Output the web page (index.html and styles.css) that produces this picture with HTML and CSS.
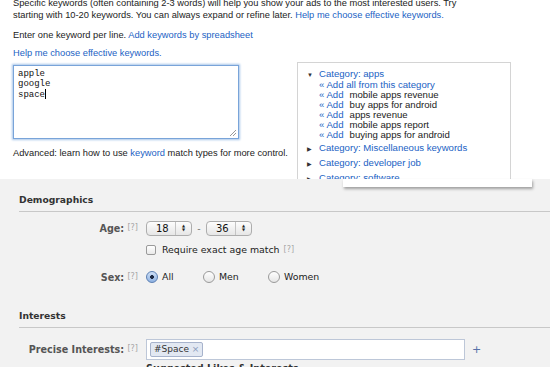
FILE: index.html
```html
<!DOCTYPE html>
<html lang="en">

<head>
    <meta charset="UTF-8">
    <meta name="viewport" content="width=device-width, initial-scale=1.0">
    <link rel="stylesheet" href="styles.css">
    <title>Keywords and Targeting</title>
</head>

<body>

    <div class="keyword-panel">
        <p class="intro">Specific keywords (often containing 2-3 words) will help you show your ads to the most interested users. Try<br>
            starting with 10-20 keywords. You can always expand or refine later. <a href="#">Help me choose effective keywords.</a></p>

        <div class="keyword-row">
            <div class="keyword-entry">
                <p class="line">Enter one keyword per line. <a href="#">Add keywords by spreadsheet</a></p>
                <p class="line"><a href="#">Help me choose effective keywords.</a></p>
                <div class="keyword-box">apple<br>google<br>space<span class="caret"></span>
                    <svg class="grip" width="8" height="8" viewBox="0 0 8 8">
                        <path d="M7 1L1 7M7 4L4 7" stroke="#999" stroke-width="1" fill="none" />
                    </svg>
                </div>
                <p class="advanced">Advanced: learn how to use <a href="#">keyword</a> match types for more control.</p>
            </div>

            <div class="suggestions">
                <div class="cat open"><span class="arrow">&#9660;</span><a href="#">Category: apps</a></div>
                <ul class="adds">
                    <li><a href="#">&laquo; Add all from this category</a></li>
                    <li><a href="#">&laquo; Add</a><span>mobile apps revenue</span></li>
                    <li><a href="#">&laquo; Add</a><span>buy apps for android</span></li>
                    <li><a href="#">&laquo; Add</a><span>apps revenue</span></li>
                    <li><a href="#">&laquo; Add</a><span>mobile apps report</span></li>
                    <li><a href="#">&laquo; Add</a><span>buying apps for android</span></li>
                </ul>
                <div class="cat"><span class="arrow">&#9654;</span><a href="#">Category: Miscellaneous keywords</a></div>
                <div class="cat"><span class="arrow">&#9654;</span><a href="#">Category: developer job</a></div>
                <div class="cat"><span class="arrow">&#9654;</span><a href="#">Category: software</a></div>
            </div>
        </div>
    </div>
    <div class="paper-edge"></div>

    <div class="targeting">
        <h2 class="section-title">Demographics</h2>
        <div class="field-grid demo">
            <div class="label">Age: <span class="help">[?]</span></div>
            <div class="age-range">
                <span class="spinner"><span class="val">18</span><span class="updown">&#9650;<br>&#9660;</span></span>
                <span class="dash">-</span>
                <span class="spinner"><span class="val">36</span><span class="updown">&#9650;<br>&#9660;</span></span>
            </div>

            <div></div>
            <div class="exact"><span class="checkbox"></span>Require exact age match <span class="help up">[?]</span></div>

            <div class="label sex">Sex: <span class="help">[?]</span></div>
            <div class="radios sex">
                <span class="radio-opt"><span class="radio on"></span>All</span>
                <span class="radio-opt"><span class="radio"></span>Men</span>
                <span class="radio-opt"><span class="radio"></span>Women</span>
            </div>
        </div>

        <h2 class="section-title interests">Interests</h2>
        <div class="field-grid">
            <div class="label precise">Precise Interests: <span class="help">[?]</span></div>
            <div class="interest-line">
                <div class="token-input"><span class="token">#Space <span class="x">&times;</span></span></div>
                <span class="plus">+</span>
            </div>
            <div></div>
            <div class="suggested">Suggested Likes &amp; Interests</div>
        </div>
    </div>

</body>

</html>
```

FILE: styles.css
```css
body {
    margin: 0;
    background-color: #f2f2f2;
    overflow: hidden;
}

a {
    color: #2262c4;
    text-decoration: none;
}

/* top: keyword tool */

.keyword-panel {
    background-color: #fff;
    height: 179px;
    overflow: hidden;
    padding-left: 13px;
    font-family: 'Liberation Sans', Arial, sans-serif;
    font-size: 9.3px;
    color: #222;
}

.intro {
    margin: -3px 0 0 0;
    line-height: 12px;
    white-space: nowrap;
}

.keyword-row {
    display: flex;
    align-items: flex-start;
    gap: 58px;
    margin-top: 8px;
}

.keyword-entry {
    width: 226px;
}

.line {
    margin: 0 0 6px 0;
    line-height: 12px;
    white-space: nowrap;
}

.keyword-box {
    position: relative;
    box-sizing: border-box;
    width: 226px;
    height: 74px;
    margin-top: 2px;
    padding: 3px 4px;
    border: 1px solid #79a4d9;
    box-shadow: 0 0 2px 1px #a9c6ea;
    font-family: 'Liberation Mono', 'Courier New', monospace;
    font-size: 9px;
    line-height: 10px;
    color: #111;
}

.caret {
    display: inline-block;
    width: 1px;
    height: 10px;
    background-color: #000;
    vertical-align: -2px;
}

.grip {
    position: absolute;
    right: 1px;
    bottom: 1px;
}

.advanced {
    margin: 8px 0 0 0;
    line-height: 12px;
    white-space: nowrap;
}

.suggestions {
    width: 203px;
    height: 130px;
    margin-top: 33px;
    padding: 6px 0 0 9px;
    border: 1px solid #d4d4d4;
    line-height: 14px;
    font-size: 9.6px;
}

.cat.open {
    line-height: 10px;
}

.arrow {
    display: inline-block;
    width: 12px;
    font-size: 6px;
    color: #333;
}

.adds {
    list-style: none;
    margin: 0 0 1px 12px;
    padding: 0;
    line-height: 10px;
}

.adds li span {
    margin-left: 6px;
    color: #222;
}

.paper-edge {
    position: absolute;
    left: 343px;
    top: 179px;
    width: 189px;
    height: 8px;
    background-color: #fff;
    box-shadow: 1px 2px 3px rgba(0, 0, 0, 0.35);
}

/* bottom: audience targeting */

.targeting {
    padding-left: 19px;
    font-family: 'DejaVu Sans', 'Lucida Grande', sans-serif;
    font-size: 9.4px;
    color: #333;
}

.section-title {
    margin: 0;
    padding: 14px 0 4px 0;
    line-height: 14px;
    font-size: 9.2px;
    font-weight: bold;
    color: #333;
    border-bottom: 1px solid #c8c8c8;
}

.section-title.interests {
    padding-top: 25px;
}

.field-grid {
    display: grid;
    grid-template-columns: 127px 1fr;
    align-items: center;
}

.field-grid.demo {
    margin-top: 9px;
    row-gap: 7px;
}

.label {
    text-align: right;
    padding-right: 8px;
    font-weight: bold;
    font-size: 9.6px;
    color: #555;
    white-space: nowrap;
}

.label.sex,
.radios.sex {
    margin-top: 6px;
}

.help {
    font-weight: normal;
    font-size: 8px;
    color: #a5a5a5;
    vertical-align: 2px;
}

.help.up {
    vertical-align: 5px;
}

.age-range {
    display: flex;
    align-items: center;
    height: 15px;
}

.spinner {
    display: flex;
    box-sizing: border-box;
    width: 46px;
    height: 15px;
    border: 1px solid #adadad;
    border-radius: 4px;
    background: linear-gradient(#fdfdfd, #e6e6e6);
    font-size: 10px;
    line-height: 13px;
    color: #111;
}

.spinner .val {
    flex: 1;
    padding-left: 9px;
}

.updown {
    width: 15px;
    border-left: 1px solid #c4c4c4;
    font-size: 4px;
    line-height: 4px;
    text-align: center;
    padding-top: 2px;
    color: #222;
}

.dash {
    width: 14px;
    text-align: center;
    color: #666;
}

.exact {
    display: flex;
    align-items: center;
    line-height: 14px;
    color: #222;
}

.checkbox {
    display: inline-block;
    box-sizing: border-box;
    width: 10px;
    height: 10px;
    margin-right: 6px;
    border: 1px solid #9a9a9a;
    border-radius: 2px;
    background: linear-gradient(#fff, #e9e9e9);
}

.exact .help {
    margin-left: 4px;
}

.radios {
    display: flex;
    color: #222;
    line-height: 14px;
}

.radio-opt {
    display: flex;
    align-items: center;
}

.radio-opt:nth-child(1) {
    width: 57px;
}

.radio-opt:nth-child(2) {
    width: 65px;
}

.radio {
    box-sizing: border-box;
    width: 12px;
    height: 12px;
    margin-right: 4px;
    border: 1px solid #9a9a9a;
    border-radius: 50%;
    background: linear-gradient(#fff, #e6e6e6);
}

.radio.on {
    border-color: #5b7fb3;
    background: radial-gradient(circle, #1d2a44 0, #1d2a44 1.6px, transparent 2.2px), linear-gradient(#cfe0f6, #8fb2e2);
}

.precise {
    margin-top: 11px;
    color: #555;
}

.interest-line {
    display: flex;
    align-items: center;
    margin-top: 11px;
}

.token-input {
    box-sizing: border-box;
    width: 319px;
    height: 21px;
    padding: 2px 3px;
    border: 1px solid #bdc7d8;
    background-color: #fff;
}

.token {
    display: inline-block;
    box-sizing: border-box;
    height: 15px;
    padding: 0 3px;
    border: 1px solid #a7b3cc;
    border-radius: 2px;
    background-color: #e2e8f2;
    font-size: 9px;
    line-height: 13px;
    color: #333;
}

.token .x {
    color: #8a9bbb;
}

.plus {
    margin-left: 7px;
    color: #5570a8;
    font-size: 11px;
}

.suggested {
    margin-top: 2px;
    font-weight: bold;
    font-size: 9.6px;
    line-height: 14px;
    color: #333;
}
```
